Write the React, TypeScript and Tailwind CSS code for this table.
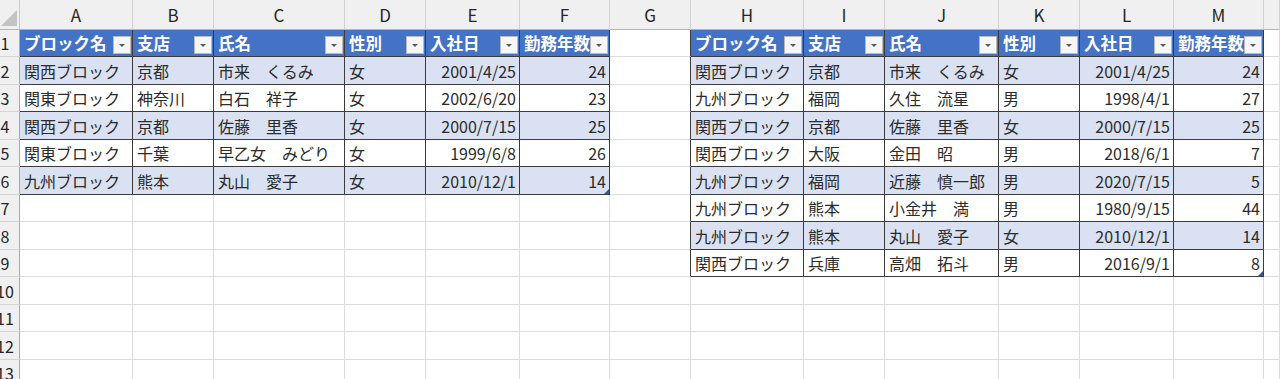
import React from 'react';

const cols = [
  { key: 'A', w: 'w-[113px]' },
  { key: 'B', w: 'w-[81px]' },
  { key: 'C', w: 'w-[131px]' },
  { key: 'D', w: 'w-[81px]' },
  { key: 'E', w: 'w-[94px]' },
  { key: 'F', w: 'w-[90px]' },
  { key: 'G', w: 'w-[81px]' },
  { key: 'H', w: 'w-[113px]' },
  { key: 'I', w: 'w-[81px]' },
  { key: 'J', w: 'w-[114px]' },
  { key: 'K', w: 'w-[81px]' },
  { key: 'L', w: 'w-[94px]' },
  { key: 'M', w: 'w-[90px]' },
  { key: '', w: 'flex-1' },
];

const headers = ['ブロック名', '支店', '氏名', '性別', '入社日', '勤務年数'];

const leftRows = [
  ['関西ブロック', '京都', '市来　くるみ', '女', '2001/4/25', '24'],
  ['関東ブロック', '神奈川', '白石　祥子', '女', '2002/6/20', '23'],
  ['関西ブロック', '京都', '佐藤　里香', '女', '2000/7/15', '25'],
  ['関東ブロック', '千葉', '早乙女　みどり', '女', '1999/6/8', '26'],
  ['九州ブロック', '熊本', '丸山　愛子', '女', '2010/12/1', '14'],
];

const rightRows = [
  ['関西ブロック', '京都', '市来　くるみ', '女', '2001/4/25', '24'],
  ['九州ブロック', '福岡', '久住　流星', '男', '1998/4/1', '27'],
  ['関西ブロック', '京都', '佐藤　里香', '女', '2000/7/15', '25'],
  ['関西ブロック', '大阪', '金田　昭', '男', '2018/6/1', '7'],
  ['九州ブロック', '福岡', '近藤　慎一郎', '男', '2020/7/15', '5'],
  ['九州ブロック', '熊本', '小金井　満', '男', '1980/9/15', '44'],
  ['九州ブロック', '熊本', '丸山　愛子', '女', '2010/12/1', '14'],
  ['関西ブロック', '兵庫', '高畑　拓斗', '男', '2016/9/1', '8'],
];

const rowNums = [1, 2, 3, 4, 5, 6, 7, 8, 9, 10, 11, 12, 13];

const FilterButton = () => (
  <div className="absolute right-[1px] bottom-[2px] w-[18px] h-[18px] bg-[#f6f6f6] border border-[#b9b9b9] flex items-center justify-center">
    <svg width="8" height="5" viewBox="0 0 8 5">
      <polygon points="1,1 7,1 4,4" fill="#595959" />
    </svg>
  </div>
);

const Cell: React.FC<{ r: number; c: number }> = ({ r, c }) => {
  const inLeft = c <= 5 && r <= 6;
  const inRight = c >= 7 && c <= 12 && r <= 9;
  const inTable = inLeft || inRight;
  const isHeader = inTable && r === 1;
  const banded = inTable && r > 1 && r % 2 === 0;
  const darkRight = inTable || (c === 6 && r <= 9);
  const tc = inLeft ? c : c - 7;
  const data = inLeft ? leftRows[r - 2] : inRight ? rightRows[r - 2] : undefined;
  const isLast = (inLeft && r === 6 && c === 5) || (inRight && r === 9 && c === 12);
  const alignRight = tc === 4 || tc === 5;

  return (
    <div
      className={[
        'relative shrink-0 h-full flex items-center border-r border-b',
        cols[c].w,
        darkRight ? 'border-r-[#3c3c3c]' : 'border-r-[#dcdcdc]',
        inTable ? 'border-b-[#3c3c3c]' : 'border-b-[#dcdcdc]',
        isHeader ? 'bg-[#4472c4]' : banded ? 'bg-[#d9e1f2]' : 'bg-white',
      ].join(' ')}
    >
      {isHeader && (
        <>
          <span className="pl-[4px] font-bold text-white whitespace-nowrap text-[16.5px]">{headers[tc]}</span>
          <FilterButton />
        </>
      )}
      {data && (
        <span className={alignRight ? 'w-full text-right pr-[3px] text-[#2b2b2b] whitespace-nowrap' : 'pl-[4px] text-[#2b2b2b] whitespace-nowrap'}>
          {data[tc]}
        </span>
      )}
      {isLast && (
        <svg className="absolute right-0 bottom-0" width="5" height="5" viewBox="0 0 5 5">
          <polygon points="5,0 5,5 0,5" fill="#2f56a6" />
        </svg>
      )}
    </div>
  );
};

const App: React.FC = () => {
  return (
    <div className="w-[1280px] h-[379px] overflow-hidden bg-white font-['Noto_Sans_CJK_JP','Noto_Sans',sans-serif] text-[16px] leading-none">
      {/* column letters */}
      <div className="flex h-[30px] bg-[#f0f0f0]">
        <div className="relative shrink-0 w-[20px] h-full border-r border-b border-r-[#c8c8c8] border-b-[#b5b5b5]">
          <svg className="absolute left-0 top-0" width="20" height="30" viewBox="0 0 20 30">
            <polygon points="17,10 17,26 1,26" fill="#c4c4c4" />
          </svg>
        </div>
        {cols.map((col, i) => (
          <div
            key={i}
            className={`shrink-0 h-full flex items-center justify-center border-r border-b border-r-[#d2d2d2] border-b-[#b5b5b5] text-[17px] text-[#262626] ${col.w}`}
          >
            {col.key}
          </div>
        ))}
      </div>

      {rowNums.map((r) => (
        <div key={r} className={`flex ${r % 2 === 1 ? 'h-[27px]' : 'h-[28px]'}`}>
          <div className="shrink-0 w-[20px] h-full overflow-hidden bg-[#f0f0f0] border-r border-b border-r-[#a9a9a9] border-b-[#d4d4d4] flex items-center">
            <div className="shrink-0 w-[34px] -ml-[12px] text-center text-[#262626]">{r}</div>
          </div>
          {cols.map((col, c) => (
            <Cell key={c} r={r} c={c} />
          ))}
        </div>
      ))}
    </div>
  );
};

export default App;
